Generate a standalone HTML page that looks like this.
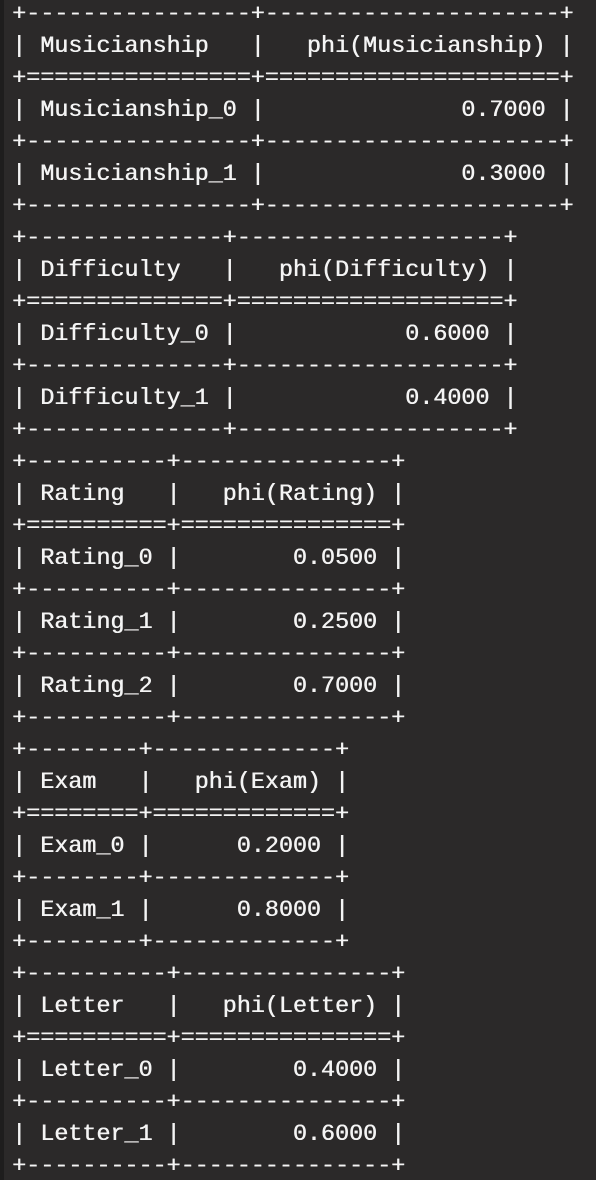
<!DOCTYPE html>
<html><head><meta charset="utf-8"><style>
html,body{margin:0;padding:0;background:#2b2929;width:596px;height:1180px;overflow:hidden}
body{border-left:4px solid #1e1d1d;box-sizing:border-box}
pre{margin:0;padding:0 0 0 8px;position:relative;top:-1px;font-family:"Liberation Mono",monospace;font-size:23.4px;line-height:32px;color:#f4f4f4;text-shadow:0.5px 0 0 #f4f4f4}
</style></head><body><pre>+----------------+---------------------+
| Musicianship   |   phi(Musicianship) |
+================+=====================+
| Musicianship_0 |              0.7000 |
+----------------+---------------------+
| Musicianship_1 |              0.3000 |
+----------------+---------------------+
+--------------+-------------------+
| Difficulty   |   phi(Difficulty) |
+==============+===================+
| Difficulty_0 |            0.6000 |
+--------------+-------------------+
| Difficulty_1 |            0.4000 |
+--------------+-------------------+
+----------+---------------+
| Rating   |   phi(Rating) |
+==========+===============+
| Rating_0 |        0.0500 |
+----------+---------------+
| Rating_1 |        0.2500 |
+----------+---------------+
| Rating_2 |        0.7000 |
+----------+---------------+
+--------+-------------+
| Exam   |   phi(Exam) |
+========+=============+
| Exam_0 |      0.2000 |
+--------+-------------+
| Exam_1 |      0.8000 |
+--------+-------------+
+----------+---------------+
| Letter   |   phi(Letter) |
+==========+===============+
| Letter_0 |        0.4000 |
+----------+---------------+
| Letter_1 |        0.6000 |
+----------+---------------+</pre></body></html>
